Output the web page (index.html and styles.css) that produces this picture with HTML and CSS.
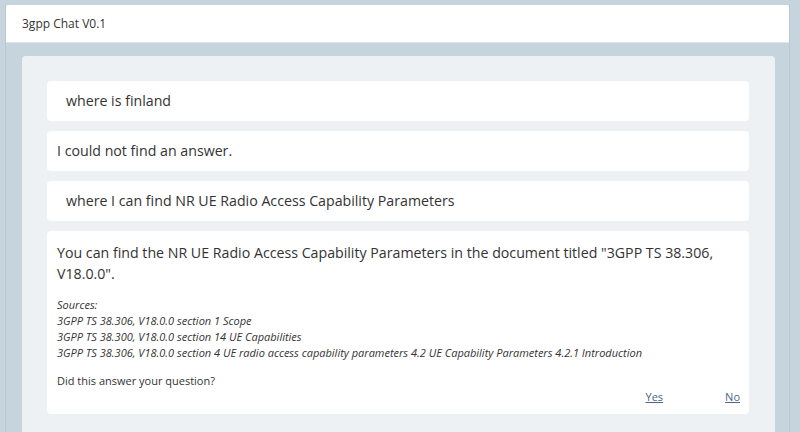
FILE: index.html
```html
<!DOCTYPE html>
<html>
<head>
<meta charset="utf-8">
<link rel="stylesheet" href="styles.css">
</head>
<body>
<div class="app">
  <header class="topbar">3gpp Chat V0.1</header>
  <div class="content">
    <main class="panel">
      <div class="msg user">where is finland</div>
      <div class="msg bot">I could not find an answer.</div>
      <div class="msg user">where I can find NR UE Radio Access Capability Parameters</div>
      <div class="msg bot answer">
        <p class="answer-text">You can find the NR UE Radio Access Capability Parameters in the document titled "3GPP TS 38.306, V18.0.0".</p>
        <div class="sources">
          <div>Sources:</div>
          <div>3GPP TS 38.306, V18.0.0 section 1 Scope</div>
          <div>3GPP TS 38.300, V18.0.0 section 14 UE Capabilities</div>
          <div>3GPP TS 38.306, V18.0.0 section 4 UE radio access capability parameters 4.2 UE Capability Parameters 4.2.1 Introduction</div>
        </div>
        <div class="question">Did this answer your question?</div>
        <div class="feedback">
          <a href="#" class="fb-link">Yes</a>
          <a href="#" class="fb-link">No</a>
        </div>
      </div>
    </main>
  </div>
</div>
</body>
</html>
```
FILE: styles.css
```css
html, body {
  margin: 0;
  padding: 0;
  height: 100%;
  overflow: hidden;
}
body {
  background: #c6d4dd;
  font-family: "Open Sans", "Noto Sans", sans-serif;
  color: #333;
}
.app {
  margin: 5px 10px 0 5px;
  border-left: 1px solid #b9c8d2;
  border-right: 1px solid #b9c8d2;
  height: calc(100% - 5px);
  box-sizing: border-box;
}
.topbar {
  background: #fff;
  height: 38px;
  box-sizing: border-box;
  padding: 0 0 0 16px;
  display: flex;
  align-items: center;
  font-size: 12px;
  color: #333;
  border-bottom: 1px solid #dfe6eb;
  border-radius: 2px 2px 0 0;
}
.content {
  padding: 13px 14px 0 16px;
}
.panel {
  background: #edf1f4;
  border-radius: 4px;
  padding: 25px 26px 20px 25px;
  display: flex;
  flex-direction: column;
  gap: 10px;
  min-height: 400px;
}
.msg {
  background: #fff;
  border-radius: 4px;
  font-size: 14.2px;
  line-height: 20px;
  padding: 10px 10px;
}
.msg.user {
  padding-left: 19px;
}
.answer {
  padding: 11px 9px 9px 10px;
}
.answer-text {
  margin: 0;
  line-height: 21px;
}
.sources {
  margin-top: 13px;
  font-size: 11px;
  line-height: 16px;
  font-style: italic;
}
.question {
  margin-top: 12px;
  font-size: 11px;
  line-height: 16px;
}
.feedback {
  display: flex;
  justify-content: flex-end;
  gap: 62px;
  font-size: 11px;
  line-height: 16px;
}
.fb-link {
  color: #4a6785;
  text-decoration: underline;
}
```
